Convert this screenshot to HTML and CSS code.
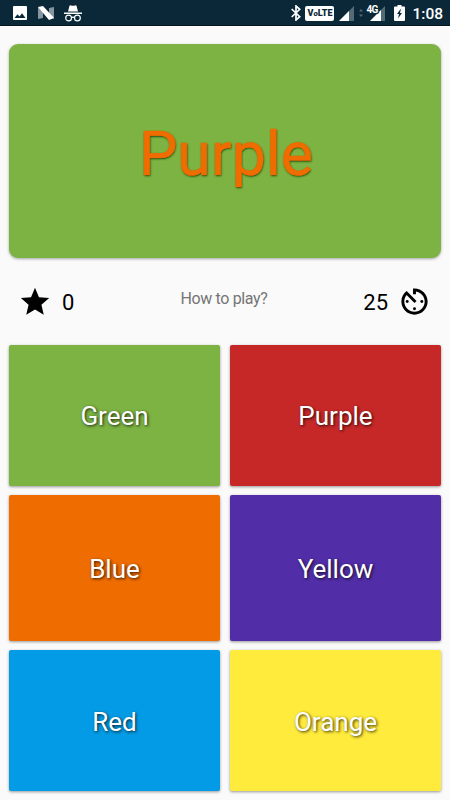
FILE: index.html
```html
<!DOCTYPE html>
<html lang="en">
<head>
    <meta charset="UTF-8">
    <meta name="viewport" content="width=device-width, initial-scale=1.0">
    <title>Color Game</title>
    <link rel="stylesheet" href="styles.css">
</head>
<body>
    <header class="status-bar">
        <div class="notifications">
            <svg width="14" height="14" viewBox="0 0 14 14"><path fill="#fff" fill-rule="evenodd" d="M1 0h12q1 0 1 1v12q0 1-1 1H1q-1 0-1-1V1q0-1 1-1zM1.5 12h11L9 7.3 6.5 10.4 4.5 8.3z"/></svg>
            <svg width="16" height="14" viewBox="0 0 16 14"><path fill="#8696a0" d="M0 1l5 3v8l-5 1zM11 2l5-1v12l-5-3z"/><path fill="#fff" d="M0 1l5-1 11 12-5 2z"/></svg>
            <svg width="18" height="17" viewBox="0 0 18 17"><path fill="#fff" d="M4 6.500L5.500.7Q6 0 7 .4 9 1 11 .4q1-.4 1.500.3L14 6.500zM0 7.500h18v1.400H0z"/><g fill="none" stroke="#fff" stroke-width="1.2"><circle cx="4.600" cy="13" r="2.900"/><circle cx="13.400" cy="13" r="2.900"/><path d="M7.300 12.700q1.700-1.200 3.400 0"/></g></svg>
        </div>
        <div class="system">
            <svg class="bluetooth" width="10" height="16" viewBox="0 0 10 16"><path fill="none" stroke="#fff" stroke-width="1.7" d="M.7 4l8 7.700L5 15V1l3.700 3.300-8 7.700"/></svg>
            <span class="volte">V<i>o</i>LTE</span>
            <svg class="signal" width="15" height="15" viewBox="0 0 15 15"><path fill="#536b77" d="M15 0v15H0z"/><path fill="#fff" d="M10 5v10H0z"/></svg>
            <svg class="data" width="4" height="8" viewBox="0 0 4 8"><path fill="#536b77" d="M2 0l2 2.500H0zM2 8l2-2.500H0z"/></svg>
            <span class="mobile">
                <svg width="15" height="15" viewBox="0 0 15 15"><path fill="#536b77" d="M15 0v15H0z"/><path fill="#fff" d="M11 4v11H0z"/></svg>
                <b>4G</b>
            </span>
            <svg class="battery" width="11" height="16" viewBox="0 0 11 16"><path fill="#fff" d="M3.500 0h4v1.500H10q1 0 1 1V15q0 1-1 1H1q-1 0-1-1V2.500q0-1 1-1h2.500z"/><path fill="#0a2838" d="M7 3.500L3 9h2l-1 4.500L8 8H6z"/></svg>
            <span class="clock">1:08</span>
        </div>
    </header>

    <main class="game">
        <section class="word-card">Purple</section>

        <section class="info">
            <div class="score">
                <svg width="34" height="34" viewBox="0 0 24 24"><path d="M12 17.270L18.180 21l-1.640-7.030L22 9.240l-7.190-.61L12 2 9.190 8.630 2 9.240l5.460 4.730L5.820 21z"/></svg>
                <span>0</span>
            </div>
            <a class="help">How to play?</a>
            <div class="timer">
                <span>25</span>
                <svg width="35" height="35" viewBox="0 0 24 24"><circle cx="12" cy="17" r="1"/><circle cx="7" cy="12" r="1"/><circle cx="17" cy="12" r="1"/><path d="M11 3v4h2V5.080c3.390.49 6 3.390 6 6.920 0 3.870-3.130 7-7 7s-7-3.130-7-7c0-1.680.59-3.220 1.580-4.420L12 13l1.410-1.410-6.800-6.800v.02C4.420 6.450 3 9.050 3 12c0 4.970 4.020 9 9 9 4.970 0 9-4.030 9-9s-4.030-9-9-9h-1z"/></svg>
            </div>
        </section>

        <section class="choices">
            <button class="choice green">Green</button>
            <button class="choice red">Purple</button>
            <button class="choice orange">Blue</button>
            <button class="choice purple">Yellow</button>
            <button class="choice blue">Red</button>
            <button class="choice yellow">Orange</button>
        </section>
    </main>
</body>
</html>
```
FILE: styles.css
```css
* {
    box-sizing: border-box;
}
body {
    margin: 0;
    height: 800px;
    display: flex;
    flex-direction: column;
    background: #fafafa;
    font-family: Roboto, sans-serif;
    overflow: hidden;
}
svg {
    display: block;
    flex: none;
}
.status-bar {
    height: 26px;
    padding: 1px 7px 0 13px;
    display: flex;
    justify-content: space-between;
    align-items: center;
    background: #0a2838;
    border-bottom: 1px solid #04141d;
    color: #fff;
}
.notifications {
    display: flex;
    align-items: center;
    gap: 10px;
}
.notifications svg:first-child {
    margin-right: 1px;
}
.system {
    display: flex;
    align-items: center;
}
.volte {
    width: 29px;
    height: 15px;
    margin: 0 5px 0 4px;
    border-radius: 2px;
    background: #fff;
    color: #0a2838;
    font-size: 9px;
    font-weight: 900;
    line-height: 15px;
    text-align: center;
}
.volte i {
    font-size: 8px;
}
.data {
    margin: 0 3px 0 5px;
}
.mobile {
    position: relative;
    margin-left: 4px;
}
.mobile b {
    position: absolute;
    left: -4px;
    top: -2px;
    font-size: 10px;
    line-height: 12px;
    letter-spacing: -0.7px;
    text-shadow: 1px 1px 0 #0a2838;
}
.battery {
    margin: 0 7px 0 9px;
}
.clock {
    font-size: 15.5px;
    font-weight: 500;
    line-height: 20px;
    padding-top: 2px;
}
.game {
    flex: 1;
    display: flex;
    flex-direction: column;
    padding: 18px 9px 9px;
}
.word-card {
    height: 214px;
    padding: 6px 0 0 2px;
    display: flex;
    justify-content: center;
    align-items: center;
    border-radius: 9px;
    background: #7cb342;
    box-shadow: 0 1px 3px rgba(0, 0, 0, 0.35);
    color: #ef6c00;
    font-size: 61px;
    -webkit-text-stroke: 0.7px #ef6c00;
    text-shadow: 0.5px 0.5px 2px rgba(0, 50, 0, 0.9);
}
.info {
    height: 87px;
    padding: 0 9px;
    display: grid;
    grid-template-columns: 1fr auto 1fr;
    align-items: center;
    font-size: 22px;
    color: #000;
}
.score, .timer {
    display: flex;
    align-items: center;
    gap: 10px;
}
.score span, .timer span {
    padding-top: 1px;
}
.timer {
    justify-content: flex-end;
    gap: 9px;
}
.help {
    color: #757575;
    font-size: 16px;
    letter-spacing: -0.35px;
    padding: 0 2px 6px 0;
}
.choices {
    flex: 1;
    display: grid;
    grid-template-columns: 1fr 1fr;
    grid-template-rows: 141px 146px 141px;
    gap: 9px 10px;
}
.choice {
    border: none;
    border-radius: 2px;
    padding: 1px 0 0;
    color: #fff;
    font-family: inherit;
    font-size: 26px;
    text-shadow: 1px 1px 3px rgba(0, 0, 0, 0.8);
    box-shadow: 0 1px 3px rgba(0, 0, 0, 0.4);
}
.green { background: #7cb342; }
.red { background: #c62828; }
.orange { background: #ef6c00; }
.purple { background: #512da8; }
.blue { background: #039be5; }
.yellow { background: #ffeb3b; }

.blue, .yellow {
    padding-top: 3px;
}
```
